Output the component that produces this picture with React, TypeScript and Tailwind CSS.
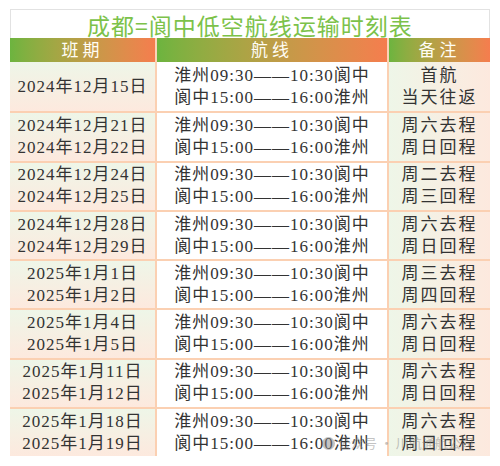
import React from "react";

type Row = { dates: string[]; remarks: string[] };

const rows: Row[] = [
  { dates: ["2024年12月15日"], remarks: ["首航", "当天往返"] },
  { dates: ["2024年12月21日", "2024年12月22日"], remarks: ["周六去程", "周日回程"] },
  { dates: ["2024年12月24日", "2024年12月25日"], remarks: ["周二去程", "周三回程"] },
  { dates: ["2024年12月28日", "2024年12月29日"], remarks: ["周六去程", "周日回程"] },
  { dates: ["2025年1月1日", "2025年1月2日"], remarks: ["周三去程", "周四回程"] },
  { dates: ["2025年1月4日", "2025年1月5日"], remarks: ["周六去程", "周日回程"] },
  { dates: ["2025年1月11日", "2025年1月12日"], remarks: ["周六去程", "周日回程"] },
  { dates: ["2025年1月18日", "2025年1月19日"], remarks: ["周六去程", "周日回程"] },
];

const font = "font-['Liberation_Serif','Noto_Sans_CJK_SC',serif]";

export default function App() {
  return (
    <div className={`w-[500px] h-[466px] bg-white relative ${font}`}>
      <div className="pt-[9px] px-[10px]">
        <div className="h-[29px] border border-b-0 border-[#e2e2e2] flex items-center justify-center">
          <span className="text-[23px] leading-none tracking-[1px] text-[#7cc24a] font-['Noto_Sans_CJK_SC',sans-serif] pt-[2px]">
            成都=阆中低空航线运输时刻表
          </span>
        </div>
        <div className="grid grid-cols-[147px_230px_103px] h-[24px] text-[#fffdf4] text-[17px] tracking-[4px]">
          <div className="bg-gradient-to-r from-[#6cb43f] to-[#f57d4e] flex items-center justify-center border-r-2 border-[#fbd3b8]">班期</div>
          <div className="bg-gradient-to-r from-[#6cb43f] to-[#f57d4e] flex items-center justify-center">航线</div>
          <div className="bg-gradient-to-r from-[#6cb43f] to-[#f57d4e] flex items-center justify-center border-l-2 border-[#fbd3b8]">备注</div>
        </div>
        {rows.map((r, i) => (
          <div
            key={i}
            className={`grid grid-cols-[147px_230px_103px] h-[49.3px] text-[17px] leading-[22px] tracking-[1px] text-[#333] ${i > 0 ? "border-t-2 border-[#fbd0b2]" : ""}`}
          >
            <div className="bg-gradient-to-b from-[#eef6e8] to-[#fde9de] flex flex-col items-center justify-center border-r-2 border-[#fbd0b2]">
              {r.dates.map((d) => (
                <div key={d}>{d}</div>
              ))}
            </div>
            <div className="bg-white flex flex-col items-center justify-center">
              <div>淮州09:30——10:30阆中</div>
              <div>阆中15:00——16:00淮州</div>
            </div>
            <div className="bg-gradient-to-r from-[#eef6e8] to-[#fde9de] flex flex-col items-center justify-center border-l-2 border-[#fbd0b2] tracking-[2px]">
              {r.remarks.map((m) => (
                <div key={m}>{m}</div>
              ))}
            </div>
          </div>
        ))}
      </div>
      {/* watermark */}
      <div className="absolute left-[322px] top-[435px] flex items-center gap-[3px] text-[13px] leading-[16px] text-[#888]/50 font-['Noto_Sans_CJK_SC',sans-serif] pointer-events-none">
        <span className="w-[13px] h-[13px] rounded-full bg-[#888]/50 inline-block" />
        <span>公众号 · 川航通航公司</span>
      </div>
    </div>
  );
}
